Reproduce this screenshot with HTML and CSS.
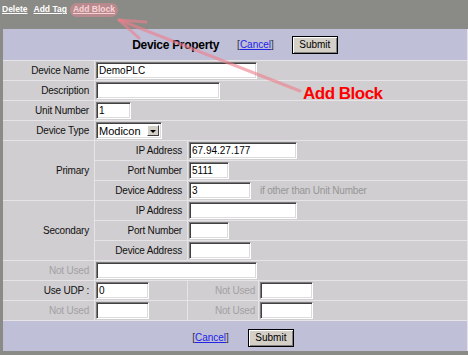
FILE: index.html
```html
<!DOCTYPE html>
<html>
<head>
<meta charset="utf-8">
<title>Device Property</title>
<link rel="stylesheet" href="styles.css">
</head>
<body>
<nav class="topbar">
  <a class="toplink" href="#">Delete</a>
  <a class="toplink" href="#">Add Tag</a>
  <a class="toplink hl" href="#">Add Block</a>
</nav>
<div class="panel">
  <form class="grid">
    <div class="c head">
      <span class="title">Device Property</span>
      <span class="cancel">[<a href="#">Cancel</a>]</span>
      <button type="button" class="btn">Submit</button>
    </div>

    <div class="c lbl">Device Name</div>
    <div class="c val span3"><input class="in w161" value="DemoPLC"></div>

    <div class="c lbl">Description</div>
    <div class="c val span3"><input class="in w124" value=""></div>

    <div class="c lbl">Unit Number</div>
    <div class="c val span3"><input class="in w35" value="1"></div>

    <div class="c lbl">Device Type</div>
    <div class="c val span3"><span class="sel"><span class="sel-t">Modicon</span><span class="sel-b"></span></span></div>

    <div class="c lbl grp">Primary</div>
    <div class="c lbl">IP Address</div>
    <div class="c val span2"><input class="in w108" value="67.94.27.177"></div>
    <div class="c lbl">Port Number</div>
    <div class="c val span2"><input class="in w40" value="5111"></div>
    <div class="c lbl">Device Address</div>
    <div class="c val span2"><input class="in w62" value="3"><span class="hint">if other than Unit Number</span></div>

    <div class="c lbl grp">Secondary</div>
    <div class="c lbl">IP Address</div>
    <div class="c val span2"><input class="in w108" value=""></div>
    <div class="c lbl">Port Number</div>
    <div class="c val span2"><input class="in w40" value=""></div>
    <div class="c lbl">Device Address</div>
    <div class="c val span2"><input class="in w62" value=""></div>

    <div class="c lbl dis">Not Used</div>
    <div class="c val span3"><input class="in w161" value=""></div>

    <div class="c lbl">Use UDP :</div>
    <div class="c val"><input class="in w53" value="0"></div>
    <div class="c lbl sm dis">Not Used</div>
    <div class="c val"><input class="in w53" value=""></div>

    <div class="c lbl dis">Not Used</div>
    <div class="c val"><input class="in w53" value=""></div>
    <div class="c lbl sm dis">Not Used</div>
    <div class="c val"><input class="in w53" value=""></div>

    <div class="c foot">
      <span class="cancel">[<a href="#">Cancel</a>]</span>
      <button type="button" class="btn">Submit</button>
    </div>
  </form>
</div>

<svg class="overlay" width="468" height="355" viewBox="0 0 468 355" aria-hidden="true">
  <g stroke="rgba(238,128,140,0.62)" stroke-width="3" stroke-linecap="round" stroke-linejoin="round" fill="none">
    <line x1="119" y1="20" x2="300" y2="91"/>
    <polyline points="146,22 119,20 139,38"/>
  </g>
</svg>
<div class="callout">Add Block</div>
</body>
</html>
```

FILE: styles.css
```css
* { box-sizing: border-box; }
html, body { margin: 0; padding: 0; }
body {
  width: 468px;
  height: 355px;
  overflow: hidden;
  position: relative;
  background: #8a8b86;
  font-family: "Liberation Sans", Arial, sans-serif;
}

.topbar {
  height: 29px;
  display: flex;
  align-items: flex-start;
  padding: 3px 0 0 2px;
}
.toplink {
  display: inline-block;
  font-size: 8.5px;
  font-weight: bold;
  line-height: 10px;
  padding-top: 1px;
  color: #fff;
  text-decoration: underline;
}
.toplink + .toplink { margin-left: 6px; }
.toplink.hl {
  margin-left: 3px;
  padding: 1px 3px 3px;
  background: #b98a8d;
  border-radius: 8px;
  color: #f8d2d6;
}

.panel {
  margin-left: 3px;
  width: 465px;
  padding-right: 1px;
  background: #e6e4e6;
}
.grid {
  margin: 0;
  display: grid;
  grid-template-columns: 91px 92px 70px 1fr;
  grid-template-rows: 31px repeat(13, 19px) 30px;
  gap: 1px;
}

.c {
  background: #d0ced0;
  display: flex;
  align-items: center;
  font-size: 10px;
  letter-spacing: -0.2px;
  color: #111;
  white-space: nowrap;
}
.lbl { justify-content: flex-end; padding-right: 5px; }
.lbl.sm { padding-right: 3px; }
.dis { color: #a3a1a3; }
.val { padding-left: 1px; }
.span3 { grid-column: 2 / 5; }
.span2 { grid-column: 3 / 5; }
.grp { grid-row: span 3; }

.head, .foot {
  grid-column: 1 / -1;
  background: #bfbfd8;
  justify-content: center;
}
.head { gap: 18px; }
.foot { gap: 19px; padding: 3px 0 0 16px; }
.title {
  font-size: 12px;
  font-weight: bold;
  letter-spacing: -0.3px;
  color: #000;
}
.cancel { color: #333; letter-spacing: 0; }
.cancel a { color: #2323e6; text-decoration: underline; }

.btn {
  width: 46px;
  height: 18px;
  margin: 0;
  padding: 0;
  font: 10px "Liberation Sans", Arial, sans-serif;
  color: #000;
  background: #d4d0c8;
  border: 1px solid #000;
  box-shadow: inset 1px 1px #fff, inset -1px -1px #808080;
}

.in {
  height: 17px;
  margin: 0;
  padding: 0 2px;
  font: 10px "Liberation Sans", Arial, sans-serif;
  color: #000;
  background: #fff;
  border: 1px solid;
  border-color: #7a7a7a #fff #fff #7a7a7a;
  box-shadow: inset 1px 1px #404040, inset -1px -1px #dcdcdc;
  outline: none;
}
.w161 { width: 161px; }
.w124 { width: 124px; }
.w35 { width: 35px; }
.w108 { width: 108px; }
.w40 { width: 40px; }
.w62 { width: 62px; }
.w53 { width: 53px; }

.hint { margin-left: 9px; color: #979597; }

.sel {
  display: inline-flex;
  width: 66px;
  height: 17px;
  padding: 2px;
  background: #fff;
  border: 1px solid;
  border-color: #7a7a7a #fff #fff #7a7a7a;
  box-shadow: inset 1px 1px #404040, inset -1px -1px #dcdcdc;
}
.sel-t {
  flex: 1;
  font-size: 11px;
  line-height: 12px;
  letter-spacing: 0;
  color: #000;
}
.sel-b {
  width: 12px;
  position: relative;
  background: #d4d0c8;
  border: 1px solid;
  border-color: #fff #404040 #404040 #fff;
}
.sel-b::after {
  content: "";
  position: absolute;
  left: 2px;
  top: 4px;
  border-top: 3px solid #000;
  border-left: 3px solid transparent;
  border-right: 3px solid transparent;
}

.overlay {
  position: absolute;
  left: 0;
  top: 0;
  pointer-events: none;
}
.callout {
  position: absolute;
  left: 303px;
  top: 85px;
  font: bold 17px/17px "Liberation Sans", Arial, sans-serif;
  letter-spacing: -0.5px;
  color: #f00;
  pointer-events: none;
}
```
